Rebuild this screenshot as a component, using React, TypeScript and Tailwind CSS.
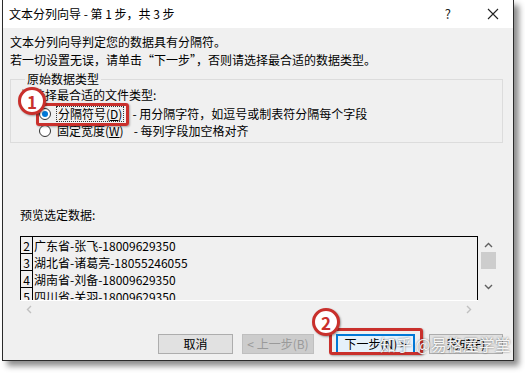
import React from 'react';

const font = { fontFamily: '"Noto Sans CJK SC", "Liberation Sans", sans-serif' };

const rows = [
    { n: '2', text: '广东省-张飞-18009629350' },
    { n: '3', text: '湖北省-诸葛亮-18055246055' },
    { n: '4', text: '湖南省-刘备-18009629350' },
    { n: '5', text: '四川省-关羽-18009629350' },
];

const Radio: React.FC<{ checked?: boolean }> = ({ checked }) => (
    <span className="w-[12px] h-[12px] rounded-full border border-[#333] bg-white flex items-center justify-center shrink-0">
        {checked && <span className="w-[6px] h-[6px] rounded-full bg-[#0078d7]" />}
    </span>
);

const Badge: React.FC<{ n: string; className: string }> = ({ n, className }) => (
    <div className={`absolute w-[28px] h-[28px] rounded-full border-[3px] border-[#c9302c] bg-white flex items-center justify-center text-[#c9302c] text-[17px] font-bold leading-none shadow-[1px_1px_2px_rgba(0,0,0,0.35)] ${className}`}>
        {n}
    </div>
);

const App: React.FC = () => {
    return (
        <div className="w-[525px] h-[376px] bg-white overflow-hidden relative text-[12px] text-black" style={font}>
            <div className="ml-[2px] w-[512px] h-[361px] border-l border-r border-b border-[#2b2b2b] bg-[#f0f0f0] flex flex-col shadow-[5px_5px_6px_rgba(0,0,0,0.45)]">
                {/* title bar */}
                <div className="h-[28px] bg-white flex items-center justify-between pl-[6px] pr-[14px] shrink-0">
                    <span className="text-[12px]">文本分列向导 - 第 1 步，共 3 步</span>
                    <div className="flex items-center gap-[36px] text-[#222]">
                        <span className="text-[13px]">?</span>
                        <svg width="12" height="12" viewBox="0 0 12 12">
                            <path d="M1 1 L11 11 M11 1 L1 11" stroke="#222" strokeWidth="1.1" />
                        </svg>
                    </div>
                </div>

                {/* body */}
                <div className="flex flex-col pl-[7px] pr-[10px] pt-[5px] leading-[18px]">
                    <p>文本分列向导判定您的数据具有分隔符。</p>
                    <p>若一切设置无误，请单击“下一步”，否则请选择最合适的数据类型。</p>

                    <fieldset className="mt-[1px] border border-[#dcdcdc] pl-[10px] pb-[3px]">
                        <legend className="ml-[4px] px-[2px] leading-[18px]">原始数据类型</legend>
                        <p className="-mt-[2px]">请选择最合适的文件类型:</p>
                        <div className="flex items-center h-[17px] mt-[1px] pl-[18px]">
                            <Radio checked />
                            <span className="ml-[5px] px-[1px] border border-dotted border-[#333] leading-[14px]">分隔符号(<u>D</u>)</span>
                            <span className="ml-[8px]">- 用分隔字符，如逗号或制表符分隔每个字段</span>
                        </div>
                        <div className="flex items-center h-[17px] pl-[18px]">
                            <Radio />
                            <span className="ml-[6px]">固定宽度(<u>W</u>)</span>
                            <span className="ml-[10px]">- 每列字段加空格对齐</span>
                        </div>
                    </fieldset>

                    <p className="mt-[63px] pl-[10px]">预览选定数据:</p>

                    {/* preview */}
                    <div className="mt-[12px] ml-[10px] w-[478px] flex flex-col">
                        <div className="flex">
                            <div className="w-[458px] h-[64px] border-t border-l border-r border-black overflow-hidden bg-[#f0f0f0] text-[12px]">
                                {rows.map(r => (
                                    <div key={r.n} className="flex h-[17px] leading-[17px]">
                                        <span className="w-[12px] border-r border-b border-black text-center shrink-0">{r.n}</span>
                                        <span className="ml-[1px] whitespace-nowrap">{r.text}</span>
                                    </div>
                                ))}
                            </div>
                            <div className="w-[20px] h-[64px] flex flex-col items-center text-[#606060]">
                                <svg width="9" height="6" viewBox="0 0 9 6" className="mt-[6px]">
                                    <path d="M1 5 L4.5 1.5 L8 5" fill="none" stroke="#606060" strokeWidth="1.4" />
                                </svg>
                                <div className="mt-[4px] w-[15px] h-[17px] bg-[#cdcdcd]" />
                                <svg width="9" height="6" viewBox="0 0 9 6" className="mt-[15px]">
                                    <path d="M1 1 L4.5 4.5 L8 1" fill="none" stroke="#606060" strokeWidth="1.4" />
                                </svg>
                            </div>
                        </div>
                        <div className="w-[458px] h-[17px] border-t border-white flex items-center justify-between px-[6px]">
                            <svg width="6" height="9" viewBox="0 0 6 9">
                                <path d="M5 1 L1.5 4.5 L5 8" fill="none" stroke="#c0c0c0" strokeWidth="1.4" />
                            </svg>
                            <svg width="6" height="9" viewBox="0 0 6 9">
                                <path d="M1 1 L4.5 4.5 L1 8" fill="none" stroke="#c0c0c0" strokeWidth="1.4" />
                            </svg>
                        </div>
                    </div>

                    {/* buttons */}
                    <div className="mt-[17px] flex items-center h-[20px] text-[12px]">
                        <div className="ml-[148px] w-[75px] h-[20px] bg-[#e1e1e1] border border-[#adadad] flex items-center justify-center">取消</div>
                        <div className="ml-[9px] w-[72px] h-[20px] bg-[#cccccc] border border-[#bfbfbf] flex items-center justify-center text-[#9a9a9a]">&lt; 上一步(B)</div>
                        <div className="ml-[22px] w-[79px] h-[20px] bg-[#e5f1fb] border-2 border-[#0078d7] flex items-center justify-center">下一步(N) &gt;</div>
                        <div className="ml-[14px] w-[74px] h-[20px] bg-[#e1e1e1] border border-[#adadad] flex items-center justify-center">完成(F)</div>
                    </div>
                </div>
            </div>

            {/* annotations */}
            <div className="absolute left-[36px] top-[103px] w-[93px] h-[23px] rounded-[3px] border-[3px] border-[#c9302c] shadow-[1px_1px_2px_rgba(0,0,0,0.3)]" />
            <Badge n="1" className="left-[18px] top-[87px]" />
            <div className="absolute left-[329px] top-[328px] w-[94px] h-[27px] rounded-[3px] border-[3px] border-[#c9302c] shadow-[1px_1px_2px_rgba(0,0,0,0.3)]" />
            <Badge n="2" className="left-[312px] top-[308px]" />
            <div className="absolute left-[380px] top-[334px] text-[16px] leading-[20px] text-white/90 whitespace-nowrap [text-shadow:0_0_2px_rgba(0,0,0,0.6)]">知乎 @易格屋学堂</div>
        </div>
    );
};

export default App;
